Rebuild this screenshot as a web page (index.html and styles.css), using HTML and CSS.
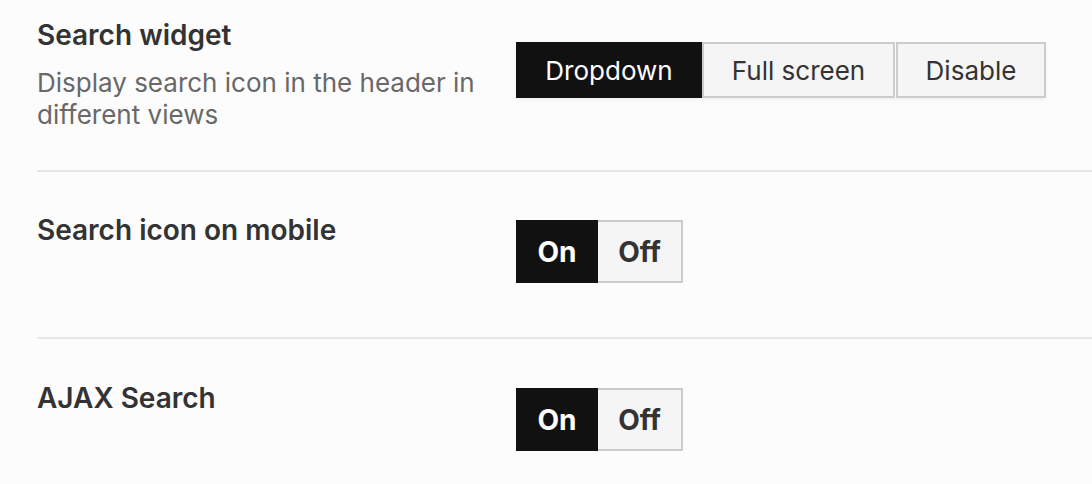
FILE: index.html
```html
<!DOCTYPE html>
<html>
<head>
<meta charset="utf-8">
<link rel="stylesheet" href="styles.css">
</head>
<body>
<div class="settings">
  <div class="row row-first">
    <div class="label">
      <div class="title">Search widget</div>
      <div class="desc">Display search icon in the header in different views</div>
    </div>
    <div class="control control-seg">
      <div class="seg">
        <span class="seg-btn active seg-dropdown">Dropdown</span>
        <span class="seg-btn seg-full">Full screen</span>
        <span class="seg-btn seg-disable">Disable</span>
      </div>
    </div>
  </div>
  <div class="row">
    <div class="label">
      <div class="title">Search icon on mobile</div>
    </div>
    <div class="control control-toggle">
      <div class="toggle">
        <span class="tg on">On</span>
        <span class="tg off">Off</span>
      </div>
    </div>
  </div>
  <div class="row row-last">
    <div class="label">
      <div class="title">AJAX Search</div>
    </div>
    <div class="control control-toggle">
      <div class="toggle">
        <span class="tg on">On</span>
        <span class="tg off">Off</span>
      </div>
    </div>
  </div>
</div>
</body>
</html>
```
FILE: styles.css
```css
html, body {
  margin: 0;
  padding: 0;
  background: #fcfcfc;
}
body {
  font-family: Inter, "Noto Sans", sans-serif;
  color: #333;
}
.settings {
  padding-left: 37px;
}
.row {
  display: flex;
  align-items: flex-start;
  border-bottom: 2px solid #e6e6e6;
  padding: 41px 0 54px;
}
.row-first {
  padding-top: 18px;
  padding-bottom: 39px;
}
.row-last {
  padding-top: 42px;
  border-bottom: none;
}
.label {
  width: 479px;
  flex: none;
}
.title {
  font-size: 28px;
  font-weight: 600;
  line-height: 34px;
  color: #333;
}
.desc {
  margin-top: 15px;
  font-size: 26px;
  line-height: 32px;
  color: #686868;
  padding-right: 0;
}
.control-seg {
  margin-top: 24px;
}
.control-toggle {
  margin-top: 7px;
}
.seg {
  display: flex;
  box-shadow: 0 2px 3px rgba(0,0,0,0.05);
}
.seg-btn {
  box-sizing: border-box;
  height: 56px;
  display: flex;
  align-items: center;
  justify-content: center;
  font-size: 26px;
  border: 2px solid #cccccc;
  background: #f5f5f5;
  color: #333;
}
.seg-btn.active {
  background: #111;
  border-color: #111;
  color: #fff;
}
.seg-dropdown { width: 186px; }
.seg-full { width: 193px; }
.seg-disable { width: 150px; margin-left: 1px; }
.toggle {
  display: flex;
}
.tg {
  box-sizing: border-box;
  height: 63px;
  display: flex;
  align-items: center;
  justify-content: center;
  font-size: 28px;
  font-weight: 700;
}
.tg.on {
  width: 82px;
  background: #111;
  color: #fff;
}
.tg.off {
  width: 85px;
  background: #f5f5f5;
  color: #333;
  border: 2px solid #cccccc;
  border-left: none;
}
```
